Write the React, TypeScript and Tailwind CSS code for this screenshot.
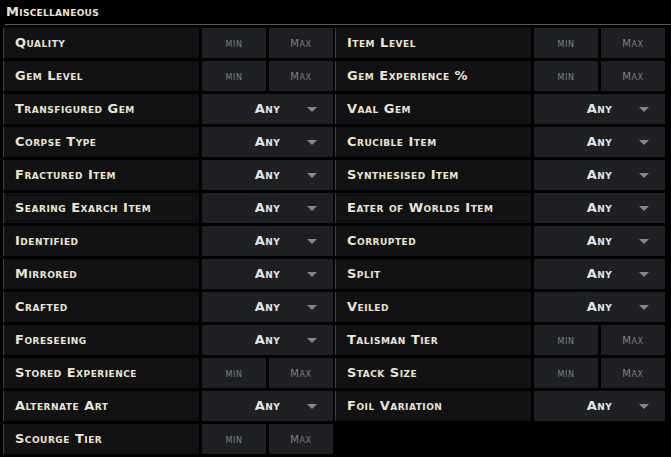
type Field = { label: string; kind: "range" | "select" }

const left: Field[] = [
  { label: "Quality", kind: "range" },
  { label: "Gem Level", kind: "range" },
  { label: "Transfigured Gem", kind: "select" },
  { label: "Corpse Type", kind: "select" },
  { label: "Fractured Item", kind: "select" },
  { label: "Searing Exarch Item", kind: "select" },
  { label: "Identified", kind: "select" },
  { label: "Mirrored", kind: "select" },
  { label: "Crafted", kind: "select" },
  { label: "Foreseeing", kind: "select" },
  { label: "Stored Experience", kind: "range" },
  { label: "Alternate Art", kind: "select" },
  { label: "Scourge Tier", kind: "range" },
]

const right: Field[] = [
  { label: "Item Level", kind: "range" },
  { label: "Gem Experience %", kind: "range" },
  { label: "Vaal Gem", kind: "select" },
  { label: "Crucible Item", kind: "select" },
  { label: "Synthesised Item", kind: "select" },
  { label: "Eater of Worlds Item", kind: "select" },
  { label: "Corrupted", kind: "select" },
  { label: "Split", kind: "select" },
  { label: "Veiled", kind: "select" },
  { label: "Talisman Tier", kind: "range" },
  { label: "Stack Size", kind: "range" },
  { label: "Foil Variation", kind: "select" },
]

const FilterRow = ({ field }: { field: Field }) => {
  return (
    <div className="flex h-[30px] border-l border-[#4d3f2d]">
      <div className="w-[195px] bg-[#121214] pl-[11px] flex items-center text-[#ece4d3] text-[13px] font-bold tracking-[0.5px] [font-variant-caps:small-caps]">
        {field.label}
      </div>
      {field.kind === "range" ? (
        <div className="flex gap-[3px] ml-[3px]">
          <div className="w-[64px] bg-[#1e2023] flex items-center justify-center text-[#7e7f82] text-[12px] tracking-[0.6px] [font-variant-caps:small-caps]">min</div>
          <div className="w-[64px] bg-[#1e2023] flex items-center justify-center text-[#7e7f82] text-[12px] tracking-[0.6px] [font-variant-caps:small-caps]">
            <span className="text-[10px] [font-variant-caps:normal]">M</span>ax
          </div>
        </div>
      ) : (
        <div className="relative w-[131px] ml-[3px] bg-[#1e2023] flex items-center justify-center text-[#e4e4e4] text-[13px] font-bold tracking-[0.4px] [font-variant-caps:small-caps]">
          Any
          <svg className="absolute right-[16px] top-[13px]" width="10" height="5" viewBox="0 0 10 5">
            <polygon points="0,0 10,0 5,5" fill="#85868a" />
          </svg>
        </div>
      )}
    </div>
  )
}

const App = () => {
  const fields: Field[] = []
  left.forEach((f, i) => {
    fields.push(f)
    if (right[i]) fields.push(right[i])
  })

  return (
    <div className="bg-black w-[671px] h-[457px] overflow-hidden font-['DejaVu_Sans',sans-serif]">
      <div className="ml-[5px] h-[25px] border-b border-[#5a5a5a] pl-[1px] pt-[2px] text-[#ece4d3] text-[13px] font-bold tracking-[0.3px] [font-variant-caps:small-caps]">
        Miscellaneous
      </div>
      <div className="grid grid-cols-[330px_330px] gap-x-[2px] gap-y-[3px] mt-[3px] ml-[3px]">
        {fields.map((f) => (
          <FilterRow key={f.label} field={f} />
        ))}
      </div>
    </div>
  )
}

export default App
